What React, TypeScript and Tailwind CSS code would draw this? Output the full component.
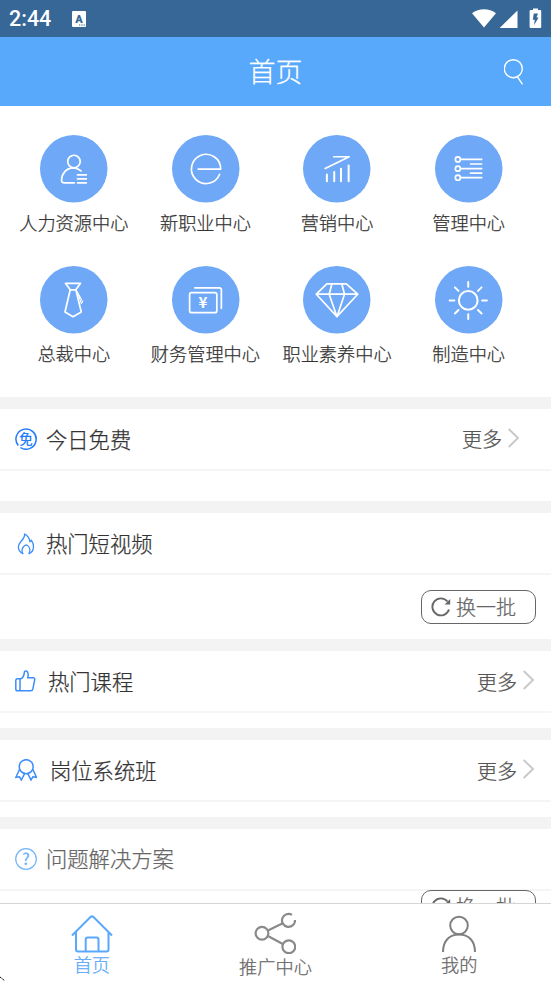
import React from "react";

interface MenuItem {
  label: string;
  icon: React.ReactNode;
}

interface SectionProps {
  title: string;
  icon: React.ReactNode;
  className: string;
  titleClass?: string;
  more?: string;
  children?: React.ReactNode;
}

const menu: MenuItem[] = [
  {
    label: "人力资源中心",
    icon: (
      <>
        <circle cx="33.7" cy="26.3" r="6.2" />
        <path d="M40.7 35.7C38 33.3 36 32.6 33 32.6C26 32.8 21.6 38.5 21.4 44.5C21.3 46.6 22.2 47.5 24 47.5H34" />
        <path d="M37.2 39.5H46M37.2 43.5H46M37.2 47.5H46" />
      </>
    ),
  },
  {
    label: "新职业中心",
    icon: <path d="M26 33.8H48.3A14.5 14.5 0 1 0 47.3 39" />,
  },
  {
    label: "营销中心",
    icon: (
      <>
        <path d="M30.5 21.6H45.8L22 33.2" />
        <path d="M23.7 39.2V46M31 36.8V46M37.7 33.5V46M45.3 30.2V46" strokeWidth="2" />
      </>
    ),
  },
  {
    label: "管理中心",
    icon: (
      <>
        <circle cx="22.7" cy="24.2" r="2.5" />
        <circle cx="22.7" cy="33.4" r="2.5" />
        <circle cx="22.7" cy="42.4" r="2.5" />
        <path d="M25.5 24.2H46.3M25.5 33.4H46.3M25.5 42.4H46.3M35.3 28.8H46.3M35.3 37.9H46.3" />
      </>
    ),
  },
  {
    label: "总裁中心",
    icon: (
      <>
        <path d="M25.3 17.2H40.2L35.6 23.6L41 45.6L32.8 50.3L24.8 45.6L30 23.6ZM30 23.6H35.6" />
        <path d="M37 25.5L42.4 35.4L41 37.2Z" strokeWidth="1" />
      </>
    ),
  },
  {
    label: "财务管理中心",
    icon: (
      <>
        <rect x="17.5" y="26.5" width="27" height="19.8" rx="2" />
        <path d="M22.7 21.7H47C48.5 21.7 49 22.3 49 23.5V42" />
        <text
          x="30.7"
          y="42"
          textAnchor="middle"
          fill="white"
          stroke="none"
          className="text-[15px] font-bold">
          ¥
        </text>
      </>
    ),
  },
  {
    label: "职业素养中心",
    icon: (
      <path d="M23.7 17.7H43L54.3 28L33.7 50.3L13.2 28ZM13.2 28H54.3M28.7 17.7L26 28L33.7 50.3L41.2 28L38.5 17.7" />
    ),
  },
  {
    label: "制造中心",
    icon: (
      <>
        <circle cx="33" cy="34.2" r="9.3" strokeWidth="2" />
        <path
          d="M33 15.8V20.5M33 48V52.6M14.5 34.2H19.2M46.8 34.2H51.5M19.8 21.2L23.3 24.7M46.2 21.2L42.7 24.7M19.8 47.2L23.3 43.7M46.2 47.2L42.7 43.7"
          strokeWidth="2"
        />
      </>
    ),
  },
];

const FreeIcon = () => (
  <svg viewBox="0 0 22 22" className="size-[22px] text-[#1f7dfa]" fill="none" stroke="currentColor" strokeWidth="1.5">
    <path d="M3.3 17.6A10.1 10.1 0 1 1 5.4 19.5" />
    <text x="11" y="15.8" textAnchor="middle" fill="currentColor" stroke="none" className="text-[13.5px] font-medium">
      免
    </text>
  </svg>
);

const FireIcon = () => (
  <svg viewBox="0 0 22 22" className="mt-0.5 size-[22px] text-[#3b8dfb]" fill="none" stroke="currentColor" strokeWidth="1.3">
    <path d="M8 20.6C5 19.5 3.3 16.7 3.4 13.8C3.6 11 5 9.6 6.3 8C8.3 5.8 9.9 4.2 9.6 1.2C13 2.7 14.4 5.6 15 8.6C15.6 8.4 16 8.1 16.5 7.4C18 9.8 18.7 11.7 18.5 14C18.3 17.3 16.6 19.7 14 20.6" />
    <path d="M8.2 21C6.8 19.3 6.7 16.8 7.8 14.6C8.7 12.9 9.8 12.2 11.1 11.8C12.8 12.2 14.8 14.4 14.9 17C14.9 18.8 14.4 20.1 13.7 21" />
  </svg>
);

const ThumbIcon = () => (
  <svg viewBox="0 0 22 22" className="size-[22px] text-[#3b8dfb]" fill="none" stroke="currentColor" strokeWidth="1.5">
    <path d="M2.5 8.7H6C8.2 7.6 9 5.7 9.3 2.8C9.4 1.4 10.1.9 11 1C13.2 1.2 13.6 4.2 12.8 7.7H18C19.5 7.7 20 8.7 19.6 10.2L17.9 18.8C17.6 20.2 17 20.8 15.7 20.8H2.5C1.3 20.8.8 20.2.8 19V10.4C.8 9.3 1.4 8.7 2.5 8.7Z" />
    <path d="M5 8.9V20.6" />
  </svg>
);

const MedalIcon = () => (
  <svg viewBox="0 0 22 22" className="size-[22px] text-[#3b8dfb]" fill="none" stroke="currentColor" strokeWidth="1.5">
    <circle cx="11.2" cy="7.7" r="7" />
    <path d="M4.6 10.3L.9 18.3L4.5 17.8L6.3 21L9.7 14.4M17.8 10.3L21.4 18.3L17.8 17.8L16 21L12.7 14.4" />
  </svg>
);

const QuestionIcon = () => (
  <svg viewBox="0 0 22 22" className="size-[22px] overflow-visible text-[#74b5fa]" fill="none" stroke="currentColor" strokeWidth="1.2">
    <circle cx="11" cy="11" r="10.3" />
    <text x="11" y="16.6" textAnchor="middle" fill="currentColor" stroke="none" className="text-[16px] font-medium">
      ?
    </text>
  </svg>
);

const MoreLink = () => (
  <div className="flex items-center">
    <span className="text-[20px] leading-none text-[#555]">更多</span>
    <svg viewBox="0 0 12 20" className="-mt-[3px] ml-1.5 h-5 w-3" fill="none" stroke="#c8c8c8" strokeWidth="1.9">
      <path d="M.7 1L10 10L.7 19" />
    </svg>
  </div>
);

const RefreshButton = () => (
  <div className="flex justify-end pr-[15px]">
    <button className="flex h-[34px] w-[115px] items-center rounded-[10px] border-[1.5px] border-[#666] pl-[9px] text-[#666]">
      <svg viewBox="0 0 20 20" className="size-5 shrink-0" fill="none" stroke="currentColor" strokeWidth="1.9">
        <path d="M18 12.5A8.5 8.5 0 1 1 16.5 4.5" />
        <path d="M19.2 2V7.6H13.6Z" fill="currentColor" stroke="none" />
      </svg>
      <span className="ml-[5px] text-[20px] leading-none">换一批</span>
    </button>
  </div>
);

const Section = ({ title, icon, className, titleClass = "ml-[9px] text-[#333]", more, children }: SectionProps) => (
  <section className={`shrink-0 border-t-[12px] border-[#f3f3f3] ${className}`}>
    <div className="flex h-[62px] items-center border-b-2 border-[#f5f5f5] pl-[15px]">
      {icon}
      <h2 className={`text-[21.3px] leading-none ${titleClass}`}>{title}</h2>
      {more && (
        <div className={`ml-auto ${more}`}>
          <MoreLink />
        </div>
      )}
    </div>
    {children}
  </section>
);

const StatusBar = () => (
  <div className="flex h-[37px] shrink-0 items-center bg-[#366797] pl-[9px] text-white">
    <span className="mt-px font-[Roboto] text-[21.5px] leading-none font-medium [-webkit-text-stroke:0]">2:44</span>
    <svg viewBox="0 0 14 16" className="ml-[21px] h-4 w-3.5">
      <rect width="14" height="16" rx="1" fill="white" />
      <text x="7" y="12" textAnchor="middle" fill="#366797" className="font-[Roboto] text-[11px] font-black">
        A
      </text>
      <path d="M7 14H8.3M9.3 14H10.6M11.6 14H12.9" stroke="#366797" />
    </svg>
    <svg viewBox="0 0 70 20" className="mr-[9px] ml-auto h-5 w-[70px] overflow-visible" fill="white">
      <path d="M0 4.2C7-1.2 17-1.2 24 4.2L12 18.5Z" />
      <path d="M45.5 1.5V19H27.7Z" />
      <path d="M61 -.5H66V1H68.2Q69.2 1 69.2 2V18Q69.2 19 68.2 19H58.6Q57.6 19 57.6 18V2Q57.6 1 58.6 1H61Z" />
      <path d="M61.8 4.5H66L64.5 8.5H66.6L62 16.3L62.8 10.8H60.8Z" fill="#366797" />
    </svg>
  </div>
);

const App = () => (
  <div className="relative flex h-[981px] w-[551px] flex-col overflow-hidden bg-white font-['Noto_Sans_CJK_SC',sans-serif] font-light [-webkit-text-stroke:0.25px]">
    <StatusBar />
    <header className="grid h-[69px] shrink-0 grid-cols-3 items-center bg-[#58a8fb] text-white">
      <h1 className="col-start-2 -mt-0.5 text-center text-[27px] leading-none">首页</h1>
      <svg viewBox="0 0 20 26" className="mr-[27px] h-[26px] w-5 justify-self-end" fill="none" stroke="white" strokeWidth="1.4">
        <circle cx="9.3" cy="9.7" r="9" />
        <path d="M13.3 17.7L18.5 25.3" />
      </svg>
    </header>

    <main className="flex min-h-0 flex-1 flex-col overflow-hidden">
      <nav className="grid h-[291px] w-[534.5px] shrink-0 grid-cols-4 content-start gap-y-[30px] pt-[29px] pl-[8px]">
        {menu.map(({ label, icon }) => (
          <a key={label} className="flex h-[101px] flex-col items-center whitespace-nowrap">
            <svg viewBox="0 0 67 67" className="size-[67.5px] shrink-0 overflow-visible" fill="none" stroke="white" strokeWidth="1.7" strokeLinecap="round" strokeLinejoin="round">
              <circle cx="33.5" cy="33.5" r="33.5" fill="#6ea8f6" stroke="none" />
              {icon}
            </svg>
            <span className="mt-[10.4px] text-[18.2px] leading-none text-[#333]">{label}</span>
          </a>
        ))}
      </nav>

      <Section title="今日免费" icon={<FreeIcon />} className="h-[104px]" more="pr-[31px]" />
      <Section title="热门短视频" icon={<FireIcon />} className="h-[138px]">
        <div className="pt-[15px]">
          <RefreshButton />
        </div>
      </Section>
      <Section title="热门课程" icon={<ThumbIcon />} className="h-[89px]" titleClass="ml-[11px] text-[#333]" more="pt-px pr-4" />
      <Section title="岗位系统班" icon={<MedalIcon />} className="h-[89px]" titleClass="ml-[13px] text-[#333]" more="pt-px pr-4" />
      <Section title="问题解决方案" icon={<QuestionIcon />} className="h-[138px]" titleClass="-mt-0.5 ml-[9px] text-[#666]">
        <div className="-mt-px">
          <RefreshButton />
        </div>
      </Section>
    </main>

    <footer className="grid h-[78px] shrink-0 grid-cols-3 border-t border-[#d5d5d5] text-[18.2px] leading-none text-[#666]">
      <a className="flex flex-col items-center pt-[11px] text-[#58a8fb]">
        <svg viewBox="0 0 42 38" className="h-[38px] w-[42px]" fill="none" stroke="currentColor" strokeWidth="2">
          <path d="M1 20.5L19.5 2Q21 .7 22.5 2L41 20.5M5 17V34.5Q5 36.5 7 36.5H35.5Q37.5 36.5 37.5 34.5V17" />
          <path d="M14.7 36V24.5Q14.7 22.5 16.7 22.5H25.5Q27.5 22.5 27.5 24.5V36" />
        </svg>
        <span className="mt-[2px]">首页</span>
      </a>
      <a className="flex flex-col items-center pt-[8px]">
        <svg viewBox="0 0 42 42" className="h-[42px] w-[42px]" fill="none" stroke="#8a8a8a" strokeWidth="2.2">
          <circle cx="8" cy="21.2" r="6.4" />
          <path d="M38 2.9A6.5 6.5 0 1 0 41 8" />
          <circle cx="34.8" cy="34.8" r="6.4" />
          <path d="M13.9 18.4L28.8 11.2M13.9 24L28.8 32" />
        </svg>
        <span className="mt-[3px]">推广中心</span>
      </a>
      <a className="flex flex-col items-center pt-[11px]">
        <svg viewBox="0 0 36 38" className="h-[38px] w-9" fill="none" stroke="#808080" strokeWidth="2">
          <circle cx="18" cy="10.5" r="8.8" />
          <path d="M2 37C2 25.5 8.5 19.5 18 19.5S34 25.5 34 37" />
        </svg>
        <span className="mt-[2px]">我的</span>
      </a>
    </footer>

    {/* mouse pointer tip */}
    <svg viewBox="0 0 5 5" className="absolute bottom-0 left-0 size-[5px]" stroke="black" strokeDasharray="1.4 .6">
      <path d="M0 1L4.5 4.5" />
    </svg>
  </div>
);

export default App;
